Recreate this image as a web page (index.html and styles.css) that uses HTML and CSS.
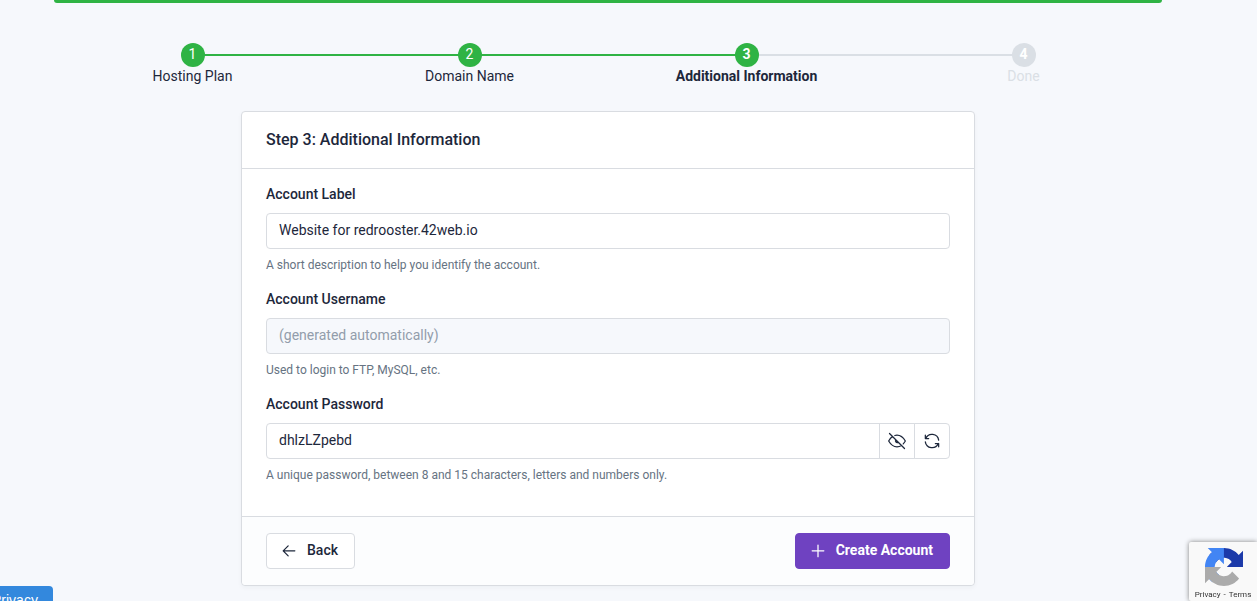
FILE: index.html
```html
<!DOCTYPE html>
<html lang="en">
<head>
<meta charset="utf-8">
<meta name="viewport" content="width=device-width, initial-scale=1">
<title>Create Account</title>
<link rel="stylesheet" href="styles.css">
</head>
<body>
<main class="page">
  <div class="banner"></div>

  <ol class="steps">
    <li class="step"><span class="step-number">1</span>Hosting Plan</li>
    <li class="step"><span class="step-number">2</span>Domain Name</li>
    <li class="step step-active" aria-current="step"><span class="step-number">3</span>Additional Information</li>
    <li class="step step-pending"><span class="step-number">4</span>Done</li>
  </ol>

  <form class="card">
    <header class="card-header">
      <h1 class="card-title">Step 3: Additional Information</h1>
    </header>
    <div class="card-body">
      <div class="field">
        <label class="label" for="account-label">Account Label</label>
        <input class="input" id="account-label" type="text" value="Website for redrooster.42web.io">
        <p class="hint">A short description to help you identify the account.</p>
      </div>
      <div class="field">
        <label class="label" for="account-username">Account Username</label>
        <input class="input" id="account-username" type="text" placeholder="(generated automatically)" disabled>
        <p class="hint">Used to login to FTP, MySQL, etc.</p>
      </div>
      <div class="field">
        <label class="label" for="account-password">Account Password</label>
        <div class="input-group">
          <input class="input" id="account-password" type="text" value="dhlzLZpebd" autocomplete="off">
          <button class="icon-button" type="button" aria-label="Hide password">
            <svg class="icon" viewBox="0 0 24 24" aria-hidden="true"><path d="M3 3l18 18M10.6 10.6a2 2 0 0 0 2.8 2.8M9.4 5.4A9.5 9.5 0 0 1 12 5c4 0 7.3 2.3 10 7-.8 1.4-1.6 2.5-2.500 3.500M17.4 17.4C15.7 18.5 13.9 19 12 19c-4 0-7.3-2.3-10-7 1.4-2.4 2.9-4.2 4.6-5.3"/></svg>
          </button>
          <button class="icon-button" type="button" aria-label="Generate new password">
            <svg class="icon" viewBox="0 0 24 24" aria-hidden="true"><path d="M20 11A8.1 8.1 0 0 0 4.5 9M4 5v4h4M4 13a8.1 8.1 0 0 0 15.5 2M20 19v-4h-4"/></svg>
          </button>
        </div>
        <p class="hint">A unique password, between 8 and 15 characters, letters and numbers only.</p>
      </div>
    </div>
    <footer class="card-footer">
      <button class="button" type="button">
        <svg class="icon" viewBox="0 0 24 24" aria-hidden="true"><path d="M5 13h14M5 13l6 6M5 13l6-6"/></svg>
        Back
      </button>
      <button class="button button-primary" type="submit">
        <svg class="icon" viewBox="0 0 24 24" aria-hidden="true"><path d="M12 6v14M5 13h14"/></svg>
        Create Account
      </button>
    </footer>
  </form>
</main>

<button class="privacy-tab" type="button">Privacy</button>

<aside class="captcha">
  <svg class="captcha-logo" viewBox="0 0 64 64" aria-hidden="true">
    <path fill="#1c3aa9" d="M64 31.955l-.033-1.37V4.687l-7.16 7.16C50.948 4.674 42.033.093 32.05.093c-10.4 0-19.622 4.96-25.458 12.64l11.736 11.86a15.55 15.55 0 0 1 4.754-5.334c2.05-1.6 4.952-2.906 8.968-2.906.485 0 .86.057 1.135.163 4.976.393 9.288 3.14 11.828 7.124l-8.307 8.307L64 31.953"/>
    <path fill="#4285f4" d="M31.862.094l-1.37.033H4.594l7.16 7.16C4.58 13.147 0 22.06 0 32.046c0 10.4 4.96 19.622 12.64 25.458L24.5 45.768a15.55 15.55 0 0 1-5.334-4.754c-1.6-2.05-2.906-4.952-2.906-8.968 0-.485.057-.86.163-1.135.393-4.976 3.14-9.288 7.124-11.828l8.307 8.307L31.86.095"/>
    <path fill="#ababab" d="M.001 32.045l.033 1.37v25.898l7.16-7.16c5.86 7.173 14.774 11.754 24.76 11.754 10.4 0 19.622-4.96 25.458-12.64l-11.736-11.86a15.55 15.55 0 0 1-4.754 5.334c-2.05 1.6-4.952 2.906-8.968 2.906-.485 0-.86-.057-1.135-.163-4.976-.393-9.288-3.14-11.828-7.124l8.307-8.307c-10.522.04-22.4.066-27.295-.005"/>
  </svg>
  <p class="captcha-links"><a href="#privacy">Privacy</a><span>-</span><a href="#terms">Terms</a></p>
</aside>
</body>
</html>
```

FILE: styles.css
```css
* {
  box-sizing: border-box;
}

body {
  margin: 0;
  background: #f6f8fc;
  color: #1d273b;
  font: 14px/20px Roboto, "Liberation Sans", sans-serif;
}

.page {
  max-width: 1190px;
  padding: 0 41px 15px 0;
  margin: 0 54px;
}

.banner {
  height: 3px;
  border-radius: 0 0 4px 4px;
  background: #2fb344;
}

.steps {
  display: flex;
  margin: 40px 0 26px;
  padding: 0;
  line-height: 18px;
  list-style: none;
}

.step {
  position: relative;
  flex: 1;
  display: flex;
  flex-direction: column;
  align-items: center;
  text-align: center;
}

.step:not(:last-child)::after {
  content: "";
  position: absolute;
  top: 11px;
  left: 50%;
  width: 100%;
  height: 2px;
  background: #2fb344;
}

.step-number {
  position: relative;
  z-index: 1;
  width: 24px;
  height: 24px;
  border-radius: 50%;
  background: #2fb344;
  color: #fff;
  line-height: 23px;
}

.step-active {
  font-weight: 700;
}

.step.step-active::after,
.step-pending .step-number {
  background: #dadfe5;
}

.step-pending {
  color: #dadfe5;
}

.step-pending .step-number {
  font-weight: 700;
}

.card {
  max-width: 734px;
  margin: 0 auto;
  border: 1px solid #d9dce1;
  border-radius: 4px;
  background: #fff;
  box-shadow: 0 2px 4px rgba(30, 41, 59, 0.04);
}

.card-header {
  padding: 16px 24px;
  border-bottom: 1px solid #d9dce1;
}

.card-title {
  margin: 0;
  font-size: 16px;
  font-weight: 500;
  line-height: 24px;
}

.card-body {
  padding: 16px 24px;
}

.field {
  margin-bottom: 16px;
}

.label {
  display: block;
  margin-bottom: 9px;
  font-weight: 500;
  line-height: 19px;
}

.input {
  display: block;
  width: 100%;
  height: 36px;
  padding: 6px 12px 8px;
  border: 1px solid #d9dce1;
  border-radius: 4px;
  background: #fff;
  color: inherit;
  font: inherit;
}

.input:disabled {
  background: #f6f8fc;
}

.input::placeholder {
  color: #929dab;
  opacity: 1;
}

.hint {
  margin: 7px 0 0;
  color: #667382;
  font-size: 12px;
  line-height: 18px;
}

.input-group {
  display: flex;
}

.input-group .input {
  flex: 1;
  border-radius: 4px 0 0 4px;
}

.icon-button {
  display: grid;
  place-items: center;
  width: 36px;
  height: 36px;
  margin-left: -1px;
  padding: 0;
  border: 1px solid #d9dce1;
  background: #fff;
  color: inherit;
}

.icon-button:last-child {
  border-radius: 0 4px 4px 0;
}

.icon {
  width: 20px;
  height: 20px;
  fill: none;
  stroke: currentColor;
  stroke-width: 1.5;
  stroke-linecap: round;
  stroke-linejoin: round;
}

.card-footer {
  display: flex;
  justify-content: space-between;
  padding: 16px 24px;
  border-top: 1px solid #d9dce1;
  border-radius: 0 0 4px 4px;
  background: #fcfdfe;
}

.button {
  display: flex;
  align-items: center;
  gap: 8px;
  height: 36px;
  padding: 0 16px 2px 12px;
  border: 1px solid #d9dce1;
  border-radius: 4px;
  background: #fff;
  color: inherit;
  font: inherit;
  font-weight: 500;
}

.button-primary {
  border-color: #6f42c1;
  background: #6f42c1;
  color: #fff;
  font-weight: 700;
}

.privacy-tab {
  position: fixed;
  bottom: -13px;
  left: -23px;
  height: 28px;
  padding: 0 15px;
  border: 0;
  border-radius: 4px;
  background: #3388dd;
  color: #fff;
  font: 14px/28px "Liberation Sans", Arial, sans-serif;
}

.captcha {
  position: fixed;
  right: 0;
  bottom: 0;
  width: 68px;
  height: 59px;
  padding: 6px 0 0;
  border-radius: 2px 0 0 2px;
  background: #f9f9f9;
  box-shadow: 0 0 5px #808080;
}

.captcha-logo {
  display: block;
  width: 38px;
  height: 38px;
  margin: 0 16px;
}

.captcha-links {
  display: flex;
  justify-content: center;
  gap: 3px;
  margin: 4px 0 0;
  color: #333;
  font-size: 8px;
  line-height: 10px;
}

.captcha-links a {
  color: inherit;
  text-decoration: none;
}
```
